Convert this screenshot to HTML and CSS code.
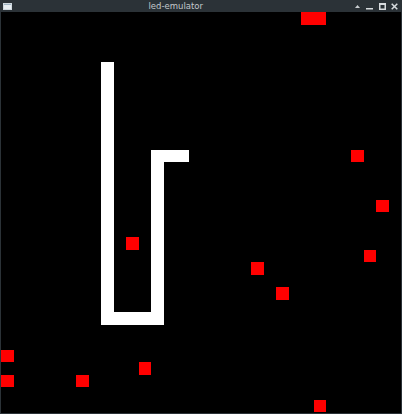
FILE: index.html
```html
<!DOCTYPE html>
<html>
<head>
<meta charset="utf-8">
<link rel="stylesheet" href="styles.css">
</head>
<body>
<div class="window">
  <div class="titlebar">
    <svg class="app-icon" width="9" height="7" viewBox="0 0 9 7">
      <rect x="0" y="0" width="9" height="7" fill="#e8eef2"/>
      <rect x="0" y="0" width="9" height="2" fill="#9fb4c4"/>
      <rect x="0.5" y="0.5" width="8" height="6" fill="none" stroke="#cfd8de" stroke-width="1"/>
    </svg>
    <div class="title">led-emulator</div>
    <div class="buttons">
      <svg width="7" height="7" viewBox="0 0 7 7"><path d="M1 5 L3.5 2 L6 5 Z" fill="#c9ced1"/></svg>
      <svg width="7" height="7" viewBox="0 0 7 7"><rect x="0" y="5" width="7" height="1.5" fill="#d8dcdf"/></svg>
      <svg width="7" height="7" viewBox="0 0 7 7"><rect x="0.75" y="0.75" width="5.5" height="5.5" fill="none" stroke="#d8dcdf" stroke-width="1.5"/><rect x="0" y="0" width="7" height="2" fill="#d8dcdf"/></svg>
      <svg width="7" height="7" viewBox="0 0 7 7"><path d="M0.7 0.7 L6.3 6.3 M6.3 0.7 L0.7 6.3" stroke="#d8dcdf" stroke-width="1.5"/></svg>
    </div>
  </div>
  <div class="canvas">
    <div class="grid">
      <div class="seg white" style="grid-area: 5 / 9 / 26 / 10"></div>
      <div class="seg white" style="grid-area: 25 / 9 / 26 / 14"></div>
      <div class="seg white" style="grid-area: 12 / 13 / 26 / 14"></div>
      <div class="seg white" style="grid-area: 12 / 13 / 13 / 16"></div>

      <div class="seg red" style="grid-area: 1 / 25 / 2 / 27"></div>
      <div class="seg red" style="grid-area: 28 / 1"></div>
      <div class="seg red" style="grid-area: 30 / 1"></div>
      <div class="seg red" style="grid-area: 30 / 7"></div>
      <div class="seg red" style="grid-area: 29 / 12"></div>
      <div class="seg red" style="grid-area: 12 / 29"></div>
      <div class="seg red" style="grid-area: 16 / 31"></div>
      <div class="seg red" style="grid-area: 20 / 30"></div>
      <div class="seg red" style="grid-area: 21 / 21"></div>
      <div class="seg red" style="grid-area: 23 / 23"></div>
      <div class="seg red" style="grid-area: 19 / 11"></div>
      <div class="seg red" style="grid-area: 32 / 26"></div>
    </div>
  </div>
</div>
</body>
</html>
```
FILE: styles.css
```css
html, body {
  margin: 0;
  padding: 0;
  background: #2b3237;
  width: 402px;
  height: 414px;
  overflow: hidden;
}
.window {
  display: flex;
  flex-direction: column;
  width: 402px;
  height: 414px;
}
.titlebar {
  height: 12px;
  display: flex;
  align-items: center;
  padding: 0 4px 0 3px;
  box-sizing: border-box;
  font-family: "DejaVu Sans", sans-serif;
}
.app-icon {
  flex: none;
  margin-top: 1px;
}
.title {
  flex: 1;
  text-align: center;
  font-size: 8.5px;
  line-height: 12px;
  color: #c3c8cb;
  padding-right: 14px;
}
.buttons {
  display: flex;
  align-items: center;
  gap: 5.5px;
  margin-top: 1px;
}
.buttons svg {
  display: block;
}
.canvas {
  margin: 0 1px 1px 1px;
  width: 400px;
  height: 401px;
  background: #000;
}
.grid {
  display: grid;
  grid-template-columns: repeat(32, 12.5px);
  grid-template-rows: repeat(32, 12.5px);
  width: 400px;
  height: 400px;
}
.seg.white {
  background: #ffffff;
}
.seg.red {
  background: #ff0000;
}
```
